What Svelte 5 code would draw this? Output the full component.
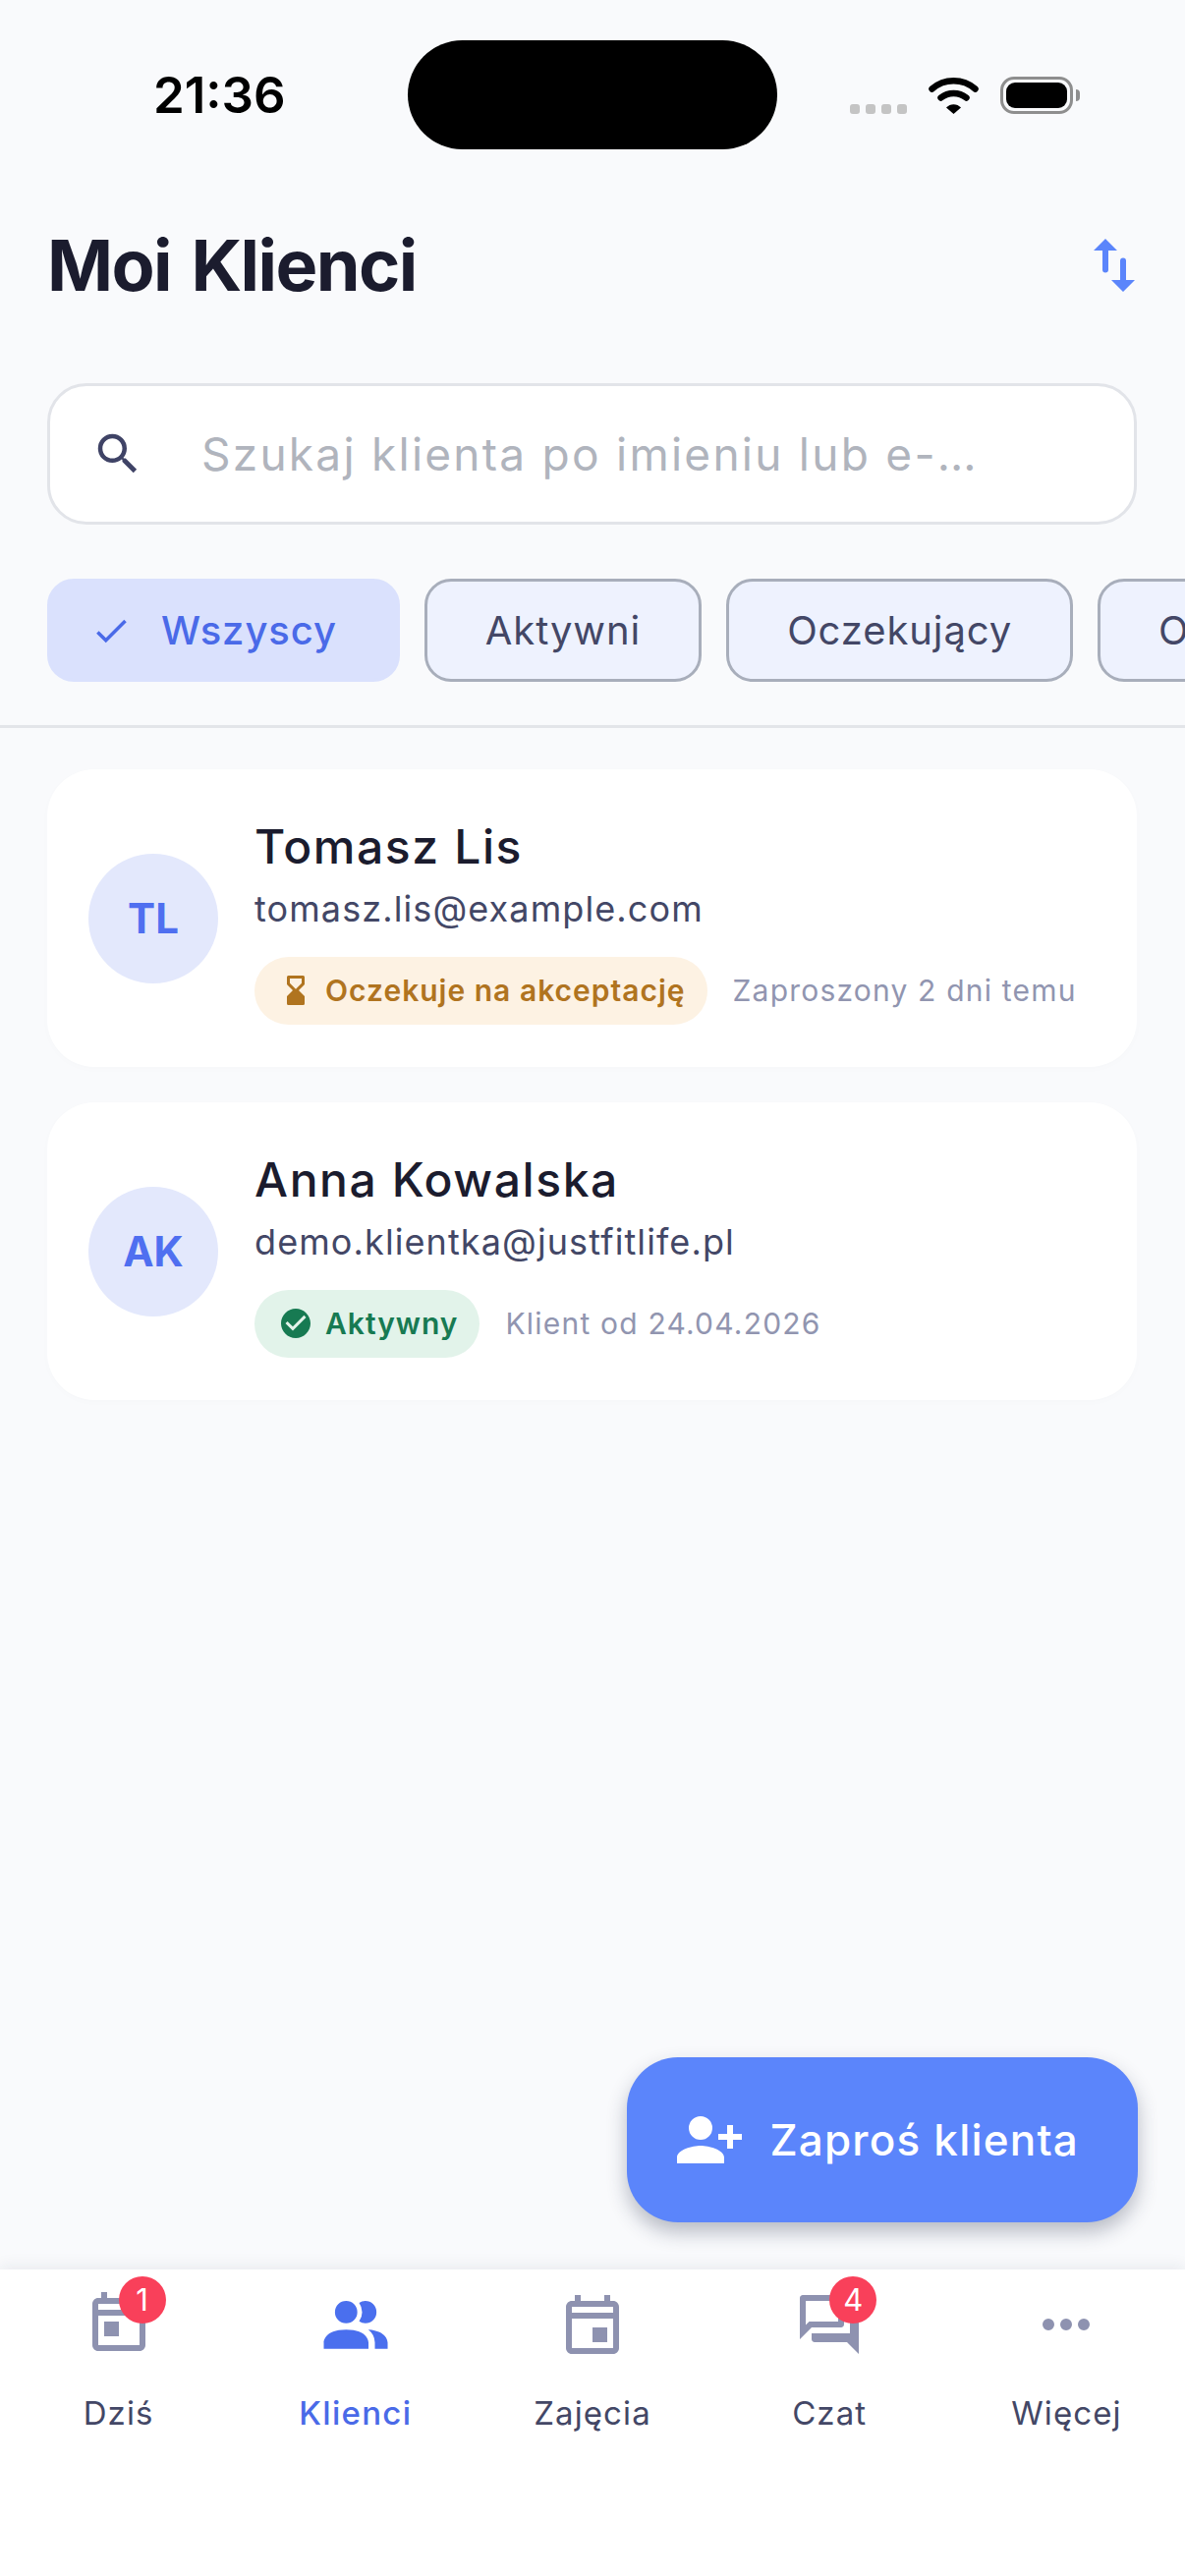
<script>
  const filters = [
    { label: 'Wszyscy', active: true },
    { label: 'Aktywni' },
    { label: 'Oczekujący' },
    { label: 'Odrzuceni' }
  ];

  const clients = [
    {
      initials: 'TL',
      name: 'Tomasz Lis',
      email: 'tomasz.lis@example.com',
      status: 'Oczekuje na akceptację',
      kind: 'pending',
      meta: 'Zaproszony 2 dni temu'
    },
    {
      initials: 'AK',
      name: 'Anna Kowalska',
      email: 'demo.klientka@justfitlife.pl',
      status: 'Aktywny',
      kind: 'active',
      meta: 'Klient od 24.04.2026'
    }
  ];

  const calendarFrame = 'M19 3H18V1H16V3H8V1H6V3H5C3.9 3 3 3.9 3 5V19C3 20.1 3.9 21 5 21H19C20.1 21 21 20.1 21 19V5C21 3.9 20.1 3 19 3M19 5V7H5V5H19M5 19V9H19V19H5';

  const tabs = [
    { label: 'Dziś', view: '0 0 24 24', d: calendarFrame + 'M7 11H12V16H7Z', badge: 1 },
    {
      label: 'Klienci',
      active: true,
      view: '0.92 0.3 22.15 22.15',
      d: 'M16 17V19H2V17S2 13 9 13 16 17 16 17M12.5 7.5A3.5 3.5 0 1 0 9 11A3.5 3.5 0 0 0 12.5 7.5M15.94 13A5.32 5.32 0 0 1 18 17V19H22V17S22 13.37 15.94 13M15 4A3.39 3.39 0 0 0 13.07 4.59A5 5 0 0 1 13.07 10.41A3.39 3.39 0 0 0 15 11A3.5 3.5 0 0 0 15 4Z'
    },
    { label: 'Zajęcia', view: '0 -1 24 24', d: calendarFrame + 'M12 12H17V17H12Z' },
    {
      label: 'Czat',
      view: '0 0 24 24',
      d: 'M15 4V11H5.17L4 12.17V4H15M16 2H3C2.45 2 2 2.45 2 3V17L6 13H16C16.55 13 17 12.55 17 12V3C17 2.45 16.55 2 16 2M21 6H19V15H6V17C6 17.55 6.45 18 7 18H18L22 22V7C22 6.45 21.55 6 21 6Z',
      badge: 4
    },
    {
      label: 'Więcej',
      view: '0 0 24 24',
      d: 'M16 12A2 2 0 0 1 18 10A2 2 0 0 1 20 12A2 2 0 0 1 18 14A2 2 0 0 1 16 12M10 12A2 2 0 0 1 12 10A2 2 0 0 1 14 12A2 2 0 0 1 12 14A2 2 0 0 1 10 12M4 12A2 2 0 0 1 6 10A2 2 0 0 1 8 12A2 2 0 0 1 6 14A2 2 0 0 1 4 12Z'
    }
  ];
</script>

<div class="screen">
  <!-- status bar -->
  <div class="status">
    <span class="time">21:36</span>
    <div class="island"></div>
    <div class="status-right">
      <div class="signal"><i></i><i></i><i></i><i></i></div>
      <svg class="wifi" width="51" height="38" viewBox="0 0 51 38">
        <path d="M3.5 12.5C16 1.5 35 1.5 47.5 12.5" fill="none" stroke="#000" stroke-width="6.5" stroke-linecap="round" />
        <path d="M12.5 21.5C20 15.5 31 15.5 38.5 21.5" fill="none" stroke="#000" stroke-width="6.5" stroke-linecap="round" />
        <path d="M18 31.5C22 27 29 27 33 31.5L25.5 38Z" fill="#000" />
      </svg>
      <div class="battery"><div class="battery-level"></div></div>
      <div class="battery-cap"></div>
    </div>
  </div>

  <!-- header -->
  <header class="header">
    <h1>Moi Klienci</h1>
    <svg class="sort" width="72" height="72" viewBox="0 0 24 24">
      <path d="M9 3L5 7H8V13.5A1 1 0 0 0 10 13.5V7H13ZM16 10.5A1 1 0 0 0 14 10.5V17H11L15 21L19 17H16Z" />
    </svg>
  </header>

  <div class="search">
    <svg width="54" height="54" viewBox="0 0 24 24">
      <path d="M9.5 3A6.5 6.5 0 0 1 16 9.5C16 11.11 15.41 12.59 14.44 13.73L14.71 14H15.5L20.5 19L19 20.5L14 15.5V14.71L13.73 14.44C12.59 15.41 11.11 16 9.5 16A6.5 6.5 0 0 1 3 9.5A6.5 6.5 0 0 1 9.5 3M9.5 5C7 5 5 7 5 9.5C5 12 7 14 9.5 14C12 14 14 12 14 9.5C14 7 12 5 9.5 5Z" />
    </svg>
    <input type="text" placeholder="Szukaj klienta po imieniu lub e-…" />
  </div>

  <div class="chips">
    {#each filters as filter}
      <button class="chip" class:active={filter.active}>
        {#if filter.active}
          <svg width="42" height="42" viewBox="0 0 24 24">
            <path d="M21 7L9 19L3.5 13.5L4.91 12.09L9 16.17L19.59 5.59L21 7Z" />
          </svg>
        {/if}
        {filter.label}
      </button>
    {/each}
  </div>

  <!-- client list -->
  <main class="list">
    {#each clients as client}
      <article class="card">
        <div class="avatar">{client.initials}</div>
        <div class="info">
          <div class="name">{client.name}</div>
          <div class="email">{client.email}</div>
          <div class="status-row">
            <span class="badge {client.kind}">
              {#if client.kind === 'pending'}
                <svg width="36" height="36" viewBox="0 0 24 24">
                  <path fill-rule="evenodd" d="M7 2H17A1 1 0 0 1 18 3V8L14 12L18 16V21A1 1 0 0 1 17 22H7A1 1 0 0 1 6 21V16L10 12L6 8V3A1 1 0 0 1 7 2ZM8 4V7.2L12 11.2L16 7.2V4Z" />
                </svg>
              {:else}
                <svg width="36" height="36" viewBox="0 0 24 24">
                  <path d="M12 2C6.5 2 2 6.5 2 12S6.5 22 12 22 22 17.5 22 12 17.5 2 12 2M10 17L5 12L6.41 10.59L10 14.17L17.59 6.58L19 8L10 17Z" />
                </svg>
              {/if}
              {client.status}
            </span>
            <span class="meta">{client.meta}</span>
          </div>
        </div>
      </article>
    {/each}
  </main>

  <button class="fab">
    <svg width="72" height="72" viewBox="0 0 24 24">
      <path transform="matrix(-1 0 0 1 24 0)" d="M15 14C12.33 14 7 15.33 7 18V20H23V18C23 15.33 17.67 14 15 14M6 10V7H4V10H1V12H4V15H6V12H9V10M15 12A4 4 0 0 0 19 8A4 4 0 0 0 15 4A4 4 0 0 0 11 8A4 4 0 0 0 15 12Z" />
    </svg>
    Zaproś klienta
  </button>

  <!-- bottom tabs -->
  <nav class="tabs">
    {#each tabs as tab}
      <div class="tab" class:active={tab.active}>
        <div class="tab-icon">
          <svg width="72" height="72" viewBox={tab.view}>
            <path d={tab.d} />
          </svg>
          {#if tab.badge}
            <span class="count">{tab.badge}</span>
          {/if}
        </div>
        <span class="tab-label">{tab.label}</span>
      </div>
    {/each}
  </nav>
</div>

<style>
  :global(body) {
    margin: 0;
    background: #f9fafc;
  }

  .screen {
    position: relative;
    width: 1206px;
    height: 2622px;
    display: flex;
    flex-direction: column;
    overflow: hidden;
    background: #f9fafc;
    font-family: Inter, "Noto Sans", sans-serif;
  }

  /* status bar */
  .status {
    display: grid;
    grid-template-columns: 415px 376px 1fr;
    height: 200px;
    flex: none;
  }

  .time {
    padding: 66px 0 0 156px;
    font-size: 51px;
    line-height: 62px;
    font-weight: 600;
    color: #000;
  }

  .island {
    height: 111px;
    margin-top: 41px;
    border-radius: 56px;
    background: #000;
  }

  .status-right {
    display: flex;
    align-items: flex-start;
    padding: 78px 0 0 74px;
  }

  .signal {
    display: flex;
    gap: 6px;
    margin-top: 28px;
  }

  .signal i {
    width: 10px;
    height: 10px;
    border-radius: 3px;
    background: #c4c4c4;
  }

  .wifi {
    margin-left: 22px;
  }

  .battery {
    box-sizing: border-box;
    width: 74px;
    height: 38px;
    margin-left: 22px;
    padding: 3px;
    border: 3px solid #8e8e8e;
    border-radius: 14px;
  }

  .battery-level {
    height: 100%;
    border-radius: 9px;
    background: #000;
  }

  .battery-cap {
    width: 4px;
    height: 12px;
    margin: 13px 0 0 3px;
    border-radius: 0 4px 4px 0;
    background: #8e8e8e;
  }

  /* header */
  .header {
    display: flex;
    align-items: center;
    justify-content: space-between;
    height: 140px;
    padding: 0 36px 0 48px;
    flex: none;
  }

  h1 {
    margin: 0;
    font-size: 72px;
    line-height: 80px;
    font-weight: 700;
    color: #1b1c2e;
    letter-spacing: -1.6px;
    word-spacing: 5px;
  }

  .sort {
    fill: #5b85fb;
  }

  /* search */
  .search {
    box-sizing: border-box;
    display: flex;
    align-items: center;
    gap: 56px;
    height: 144px;
    margin: 50px 49px 0 48px;
    padding: 0 0 0 42px;
    background: #fff;
    border: 3px solid #e2e4e9;
    border-radius: 40px;
    flex: none;
  }

  .search svg {
    fill: #3f4366;
    flex: none;
  }

  .search input {
    flex: 1;
    min-width: 0;
    border: 0;
    outline: 0;
    background: none;
    font-family: inherit;
    font-size: 46px;
    letter-spacing: 2.25px;
  }

  .search input::placeholder {
    color: #b0b4bd;
    opacity: 1;
  }

  /* filter chips */
  .chips {
    display: flex;
    gap: 25px;
    padding: 55px 0 44px 48px;
    border-bottom: 3px solid #e3e5e9;
    overflow: hidden;
    flex: none;
  }

  .chip {
    box-sizing: border-box;
    display: flex;
    align-items: center;
    gap: 30px;
    height: 105px;
    padding: 0 59px;
    flex: none;
    background: #eef2fe;
    border: 3px solid #a8aebb;
    border-radius: 27px;
    font-family: inherit;
    font-size: 40px;
    letter-spacing: 0.9px;
    color: #434766;
    white-space: nowrap;
  }

  .chip.active {
    padding: 0 61px 0 41px;
    background: #dae1fd;
    border-color: #dae1fd;
    color: #4a6ae8;
    font-weight: 500;
  }

  .chip svg {
    fill: #4a6ae8;
  }

  /* client cards */
  .list {
    flex: 1;
    display: flex;
    flex-direction: column;
    gap: 36px;
    padding: 42px 49px 0 48px;
  }

  .card {
    display: flex;
    align-items: center;
    gap: 37px;
    height: 303px;
    padding: 0 42px;
    background: #fff;
    border-radius: 48px;
    box-shadow: 0 2px 8px rgba(30, 40, 80, 0.015);
  }

  .avatar {
    display: flex;
    align-items: center;
    justify-content: center;
    width: 132px;
    height: 132px;
    border-radius: 50%;
    background: #e3e8fc;
    color: #4f6ff0;
    font-size: 42px;
    font-weight: 700;
    flex: none;
  }

  .info {
    display: flex;
    flex-direction: column;
    align-items: flex-start;
    padding-top: 6px;
  }

  .name {
    font-size: 48px;
    line-height: 58px;
    font-weight: 500;
    letter-spacing: 1.6px;
    color: #1b1c2e;
  }

  .email {
    margin-top: 9px;
    font-size: 36px;
    line-height: 50px;
    letter-spacing: 1.1px;
    color: #434766;
  }

  .status-row {
    display: flex;
    align-items: center;
    gap: 26px;
    margin-top: 24px;
    white-space: nowrap;
  }

  .badge {
    display: flex;
    align-items: center;
    gap: 12px;
    height: 69px;
    padding: 0 22px 0 24px;
    border-radius: 35px;
    font-size: 30px;
    font-weight: 600;
    letter-spacing: 1px;
  }

  .badge.pending {
    background: #fdf2e3;
    color: #b0741f;
    fill: #b0741f;
  }

  .badge.active {
    background: #e2f3ea;
    color: #177a52;
    fill: #177a52;
  }

  .meta {
    font-size: 30px;
    letter-spacing: 1.2px;
    color: #9195b0;
  }

  /* floating button, lies over the list */
  .fab {
    position: absolute;
    right: 48px;
    bottom: 360px;
    display: flex;
    align-items: center;
    gap: 25px;
    height: 168px;
    padding: 0 60px 0 48px;
    border: 0;
    border-radius: 52px;
    background: #5b85fb;
    color: #fff;
    fill: #fff;
    font-family: inherit;
    font-size: 44px;
    font-weight: 500;
    letter-spacing: 1.2px;
    box-shadow: 0 10px 20px rgba(30, 40, 70, 0.3);
  }

  /* tab bar */
  .tabs {
    position: relative;
    display: grid;
    grid-template-columns: repeat(5, 1fr);
    height: 312px;
    padding-top: 20px;
    box-sizing: border-box;
    background: #fff;
    box-shadow: 0 -4px 14px rgba(30, 40, 70, 0.07);
    flex: none;
  }

  .tab {
    display: flex;
    flex-direction: column;
    align-items: center;
  }

  .tab-icon {
    position: relative;
    width: 72px;
    height: 72px;
    fill: #8e92b0;
  }

  .tab-icon svg {
    display: block;
  }

  .count {
    position: absolute;
    left: 36px;
    top: -13px;
    width: 48px;
    height: 48px;
    border-radius: 50%;
    background: #f9405a;
    color: #fff;
    font-size: 31px;
    line-height: 48px;
    text-align: center;
  }

  .tab-label {
    margin-top: 32px;
    font-size: 33px;
    line-height: 44px;
    letter-spacing: 1.1px;
    color: #434766;
  }

  .tab.active .tab-icon {
    fill: #4a6fee;
  }

  .tab.active .tab-label {
    color: #4a6ae8;
    font-weight: 500;
    letter-spacing: 1.3px;
  }
</style>
